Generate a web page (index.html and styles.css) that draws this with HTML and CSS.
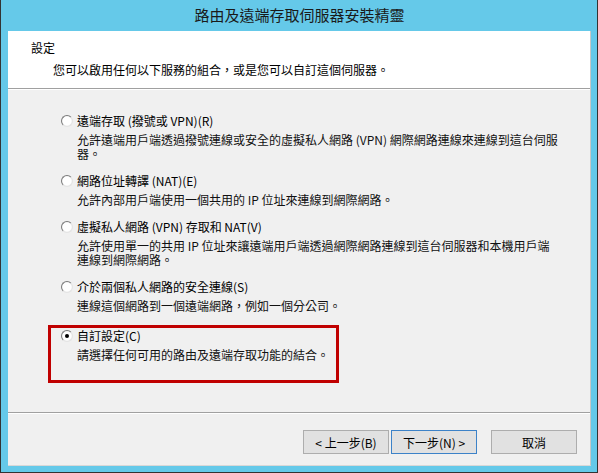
FILE: index.html
```html
<!DOCTYPE html>
<html>
<head>
  <title>路由及遠端存取伺服器安裝精靈</title>
  <link rel="stylesheet" href="styles.css">
</head>
<body>
  <div class="window">
    <div class="title-bar">路由及遠端存取伺服器安裝精靈</div>

    <div class="client">
      <div class="header">
        <div class="header-title">設定</div>
        <div class="header-sub">您可以啟用任何以下服務的組合，或是您可以自訂這個伺服器。</div>
      </div>

      <div class="options">
        <div class="option">
          <div class="option-label"><span class="radio"></span>遠端存取 (撥號或 VPN)(R)</div>
          <div class="option-desc">允許遠端用戶端透過撥號連線或安全的虛擬私人網路 (VPN) 網際網路連線來連線到這台伺服器。</div>
        </div>

        <div class="option">
          <div class="option-label"><span class="radio"></span>網路位址轉譯 (NAT)(E)</div>
          <div class="option-desc">允許內部用戶端使用一個共用的 IP 位址來連線到網際網路。</div>
        </div>

        <div class="option">
          <div class="option-label"><span class="radio"></span>虛擬私人網路 (VPN) 存取和 NAT(V)</div>
          <div class="option-desc">允許使用單一的共用 IP 位址來讓遠端用戶端透過網際網路連線到這台伺服器和本機用戶端連線到網際網路。</div>
        </div>

        <div class="option">
          <div class="option-label"><span class="radio"></span>介於兩個私人網路的安全連線(S)</div>
          <div class="option-desc">連線這個網路到一個遠端網路，例如一個分公司。</div>
        </div>

        <!-- highlighted choice -->
        <div class="highlight">
          <div class="option">
            <div class="option-label"><span class="radio checked"></span>自訂設定(C)</div>
            <div class="option-desc">請選擇任何可用的路由及遠端存取功能的結合。</div>
          </div>
        </div>
      </div>

      <div class="footer">
        <button class="btn">&lt; 上一步(B)</button>
        <button class="btn btn-default">下一步(N) &gt;</button>
        <button class="btn btn-cancel">取消</button>
      </div>
    </div>
  </div>
</body>
</html>
```

FILE: styles.css
```css
body, html {
  margin: 0;
  padding: 0;
  background-color: #65c9e9;
}

body {
  font-family: "Noto Sans CJK TC", "Noto Sans", sans-serif;
  font-size: 12px;
  color: #000;
}

.window {
  width: 598px;
  height: 473px;
  box-sizing: border-box;
  background-color: #65c9e9;
  border: 1px solid #333;
  border-top: none;
  padding: 0 6px 6px 7px;
  display: flex;
  flex-direction: column;
}

.title-bar {
  height: 31px;
  line-height: 30px;
  text-align: center;
  font-size: 15px;
  color: #1a1a1a;
}

.client {
  flex: 1;
  background-color: #f0f0f0;
  border-right: 1px solid #c8c8c8;
  border-bottom: 1px solid #d8d8d8;
  display: flex;
  flex-direction: column;
}

.header {
  height: 58px;
  box-sizing: border-box;
  background-color: #fff;
  border-bottom: 1px solid #a0a0a0;
  padding: 9px 0 0 23px;
}

.header-title {
  line-height: 16px;
}

.header-sub {
  line-height: 16px;
  margin-top: 6px;
  padding-left: 22px;
}

.options {
  flex: 1;
  border-top: 1px solid #fff;
  padding: 23px 32px 0 53px;
}

.option {
  margin-bottom: 12px;
}

.option-label {
  height: 16px;
  line-height: 16px;
  display: flex;
  align-items: center;
}

.option-desc {
  margin-top: 4px;
  padding-left: 16px;
  line-height: 14px;
  color: #111;
}

.radio {
  width: 12px;
  height: 12px;
  border-radius: 50%;
  box-sizing: border-box;
  border: 1px solid #7a7a7a;
  border-right-color: #e4e4e4;
  border-bottom-color: #e4e4e4;
  background: radial-gradient(circle at 50% 50%, #fff 55%, #dcdcdc 100%);
  margin-right: 4px;
  position: relative;
  flex-shrink: 0;
}

.radio.checked::after {
  content: "";
  position: absolute;
  left: 3px;
  top: 3px;
  width: 4px;
  height: 4px;
  border-radius: 50%;
  background-color: #000;
}

.highlight {
  width: 291px;
  box-sizing: border-box;
  margin-left: -13px;
  margin-top: 1px;
  border: 3px solid #c00000;
  padding: 0 0 6px 10px;
}

.footer {
  height: 53px;
  box-sizing: border-box;
  border-top: 1px solid #a0a0a0;
  box-shadow: inset 0 1px #fff;
  padding: 17px 13px 0 0;
  display: flex;
  justify-content: flex-end;
  gap: 2px;
}

.btn {
  width: 86px;
  height: 24px;
  box-sizing: border-box;
  background-color: #e1e1e1;
  border: 1px solid #adadad;
  font-family: inherit;
  font-size: 12px;
  color: #000;
  padding: 0;
  cursor: pointer;
}

.btn-default {
  border-color: #3c82c8;
}

.btn-cancel {
  margin-left: 12px;
}
```
